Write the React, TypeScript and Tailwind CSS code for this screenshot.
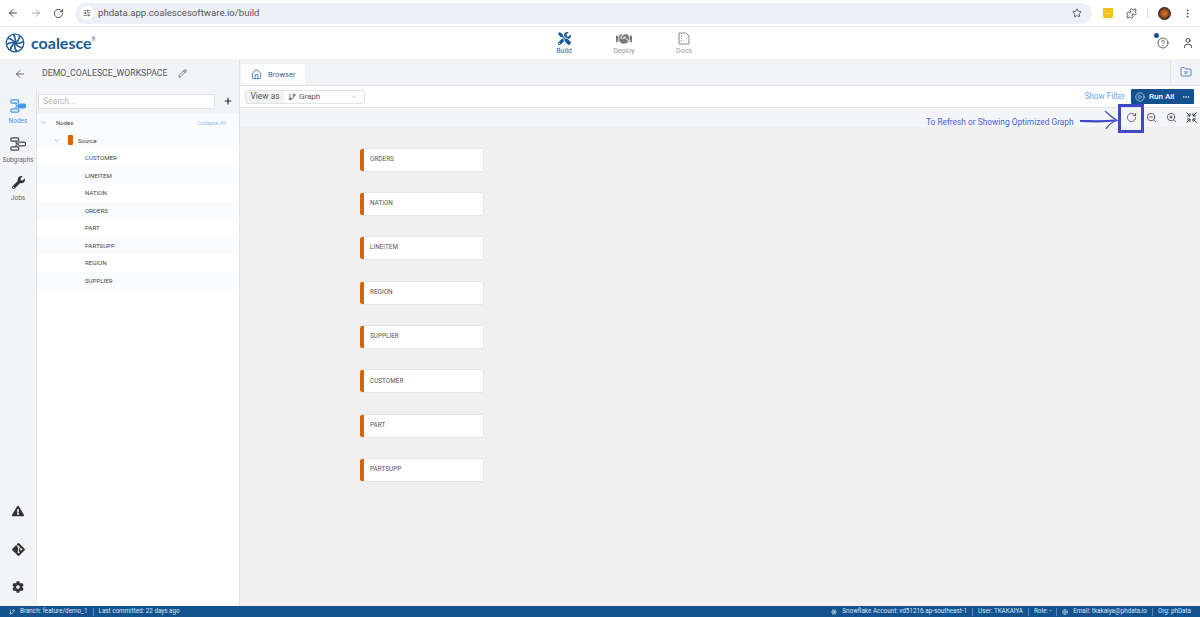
import React from "react";
import { ArrowLeft, ArrowRight, RotateCw, SlidersHorizontal, Star, Puzzle, MoreVertical, Pencil, Plus, ChevronDown, GitBranch, House, CirclePlay, Ellipsis, ZoomIn, ZoomOut, CircleHelp, User, FolderX, Globe, Snowflake } from "lucide-react";
import { FaTools, FaHandshake, FaWrench, FaExclamationTriangle, FaGitAlt, FaCog } from "react-icons/fa";

const F = { fontFamily: "Roboto, 'Liberation Sans', sans-serif" };

function Logo() {
  const blades = [0, 45, 90, 135, 180, 225, 270, 315];
  return (
    <svg width="20" height="20" viewBox="0 0 20 20" fill="none" stroke="#1b5a96">
      <circle cx="10" cy="10" r="8.8" strokeWidth="1.3" />
      {blades.map((a) => (
        <path key={a} d="M10 10 C 12 8, 15 7, 14.5 3" strokeWidth="1.5" transform={`rotate(${a} 10 10)`} />
      ))}
    </svg>
  );
}

function NodesIcon({ c, active }: { c: string; active?: boolean }) {
  return (
    <svg width="17" height="14" viewBox="0 0 17 14" fill="none" stroke={c} strokeWidth="1.2">
      <rect x="0.8" y="0.8" width="8" height="3.4" rx="1.5" />
      <rect x="0.8" y="9.8" width="8" height="3.4" rx="1.5" />
      <rect x="8" y="5.2" width="7.5" height="3.6" rx="1.5" fill={active ? c : "none"} />
      <path d="M6 4.2 V5.5 Q6 7 8 7 M6 9.8 V8.5 Q6 7 8 7" />
    </svg>
  );
}

function RailItem({ icon, label, color }: { icon: React.ReactNode; label: string; color: string }) {
  return (
    <div className="flex h-[38.5px] flex-col items-center justify-start">
      <div className="flex h-[17px] items-center">{icon}</div>
      <span className="mt-[3px] text-[6.5px] leading-[9px]" style={{ color }}>{label}</span>
    </div>
  );
}

function TreeRow({ label, alt }: { label: string; alt: boolean }) {
  return (
    <div className={`flex h-[17.5px] items-center pl-[48px] text-[6.1px] text-[#444] ${alt ? "bg-[#fafbfc]" : "bg-white"}`}>
      {label}
    </div>
  );
}

function GraphNode({ label }: { label: string }) {
  return (
    <div className="flex h-[24px] w-[124px] items-center rounded-[2px] border border-[#e6e6e6] border-l-0 bg-white">
      <div className="h-full w-[4px] shrink-0 rounded-l-[2px] bg-[#d4650a]" />
      <span className="ml-[6px] text-[6.4px] text-[#555]">{label}</span>
    </div>
  );
}

function FitIcon() {
  return (
    <svg width="11" height="11" viewBox="0 0 11 11" fill="none" stroke="#333" strokeWidth="1">
      <path d="M0.5 0.5 L3.6 3.6 M1.2 4 H4 V1.2" />
      <path d="M10.5 0.5 L7.4 3.6 M9.8 4 H7 V1.2" />
      <path d="M0.5 10.5 L3.6 7.4 M1.2 7 H4 V9.8" />
      <path d="M10.5 10.5 L7.4 7.4 M9.8 7 H7 V9.8" />
    </svg>
  );
}

export default function App() {
  return (
    <div className="relative flex h-[617px] w-[1200px] flex-col overflow-hidden bg-white" style={F}>
      {/* browser bar */}
      <div className="flex h-[27px] shrink-0 items-center border-b border-[#e5e7eb] bg-white pl-[7px] text-[#555]">
        <ArrowLeft size={12} strokeWidth={2} className="text-[#444]" />
        <ArrowRight size={12} strokeWidth={2} className="ml-[11px] text-[#aaa]" />
        <RotateCw size={11} strokeWidth={2} className="ml-[10.5px] text-[#444]" />
        <div className="ml-[11.5px] flex h-[21px] w-[1017px] shrink-0 items-center rounded-full bg-[#edf0f7] pl-[5px]">
          <div className="flex h-[14px] w-[14px] items-center justify-center rounded-full bg-white">
            <SlidersHorizontal size={8} className="text-[#444]" />
          </div>
          <span className="ml-[4px] text-[9.6px] text-[#555]">phdata.app.coalescesoftware.io/build</span>
          <Star size={10} strokeWidth={2} className="ml-auto mr-[10px] text-[#444]" />
        </div>
        <div className="ml-[11px] flex h-[10px] w-[10px] shrink-0 items-center justify-center rounded-[1px] bg-[#f2c21a] text-[6px] leading-none text-white">---</div>
        <Puzzle size={11} strokeWidth={2} className="ml-[12.5px] shrink-0 text-[#444]" />
        <div className="ml-[10.5px] h-[9px] w-px shrink-0 bg-[#cfdbe8]" />
        <div className="ml-[10px] h-[13px] w-[13px] shrink-0 rounded-full bg-[radial-gradient(circle,#c8641e_25%,#2a2320_70%)]" />
        <MoreVertical size={11} strokeWidth={2} className="ml-[11px] shrink-0 text-[#444]" />
      </div>

      {/* app header */}
      <div className="relative flex h-[32px] shrink-0 items-center bg-white pl-[5px]">
        <Logo />
        <span className="ml-[6px] text-[16px] font-bold leading-none text-[#1b5a96]" style={{ fontFamily: "Lato, sans-serif" }}>coalesce</span>
        <span className="mb-[7px] text-[5px] leading-none text-[#1b5a96]">®</span>
        <div className="absolute left-[534px] top-0 flex">
          {[
            { l: "Build", c: "#2a68a8", i: <FaTools size={13} color="#1b5a96" /> },
            { l: "Deploy", c: "#999", i: <FaHandshake size={16} color="#777" /> },
            { l: "Docs", c: "#999", i: <svg width="12" height="13" viewBox="0 0 12 13" fill="none" stroke="#888" strokeWidth="1"><path d="M1 1 H8 L11 4 V12 H1 Z" /><path d="M3 4.5 H4 M3 6.5 H4 M3 8.5 H4" /></svg> },
          ].map((x) => (
            <div key={x.l} className="flex w-[60px] flex-col items-center pt-[5px]">
              <div className="flex h-[13px] items-center">{x.i}</div>
              <span className="mt-[2px] text-[7px] leading-[9px]" style={{ color: x.c }}>{x.l}</span>
            </div>
          ))}
        </div>
        <div className="relative ml-auto mr-[6px] flex items-center gap-[13px]">
          <CircleHelp size={12} strokeWidth={1.5} className="text-[#333]" />
          <User size={12} strokeWidth={1.8} className="text-[#333]" />
          <div className="absolute left-[-3px] top-[-4px] h-[5px] w-[5px] rounded-full bg-[#14528f]" />
        </div>
      </div>

      {/* workspace */}
      <div className="flex min-h-0 flex-1">
        {/* left */}
        <div className="flex w-[240px] shrink-0 flex-col border-r border-[#e3e3e6] bg-[#f3f4f8]">
          <div className="flex h-[29px] shrink-0 items-center pl-[14px]">
            <ArrowLeft size={12} strokeWidth={1.6} className="text-[#444]" />
            <span className="ml-[16px] text-[8.7px] text-[#555]">DEMO_COALESCE_WORKSPACE</span>
            <Pencil size={9} strokeWidth={2} className="ml-[11px] text-[#555]" />
          </div>
          <div className="flex min-h-0 flex-1">
            <div className="flex w-[37px] shrink-0 flex-col border-r border-[#e3e3e6] pt-[9px]">
              <RailItem icon={<NodesIcon c="#3f97ee" active />} label="Nodes" color="#3f97ee" />
              <RailItem icon={<NodesIcon c="#444" />} label="Subgraphs" color="#666" />
              <RailItem icon={<FaWrench size={13} color="#333" />} label="Jobs" color="#666" />
              <div className="mt-auto flex flex-col items-center">
                <div className="flex h-[38px] items-center"><FaExclamationTriangle size={12} color="#333" /></div>
                <div className="flex h-[38px] items-center"><FaGitAlt size={15} color="#333" /></div>
                <div className="flex h-[38px] items-center"><FaCog size={12} color="#333" /></div>
              </div>
            </div>
            <div className="flex min-w-0 flex-1 flex-col">
              <div className="flex h-[26px] shrink-0 items-center">
                <div className="ml-[1px] flex h-[15px] w-[177px] items-center rounded-[1px] border border-[#dfdfdf] bg-white pl-[4px] text-[8.5px] text-[#b5b5b5]">Search...</div>
                <Plus size={10} strokeWidth={2.6} className="ml-[8px] text-[#222]" />
              </div>
              <div className="min-h-0 flex-1 bg-white">
                <div className="relative flex h-[17.5px] items-center bg-[#fbfcfd] pl-[3px] text-[6px] text-[#444]">
                  <ChevronDown size={7} className="text-[#888]" />
                  <span className="ml-[9px]">Nodes</span>
                  <span className="absolute right-[13px] top-[5px] text-[5.5px] text-[#8fbdf0]">Collapse All</span>
                </div>
                <div className="flex h-[17.5px] items-center bg-[#fafbfc] pl-[16px] text-[6px] text-[#444]">
                  <ChevronDown size={7} className="text-[#888]" />
                  <div className="ml-[8px] h-[10px] w-[5px] rounded-[1px] bg-[#d4650a]" />
                  <span className="ml-[5px]">Source</span>
                </div>
                {["CUSTOMER", "LINEITEM", "NATION", "ORDERS", "PART", "PARTSUPP", "REGION", "SUPPLIER"].map((n, i) => (
                  <TreeRow key={n} label={n} alt={i % 2 === 1} />
                ))}
              </div>
            </div>
          </div>
        </div>

        {/* main */}
        <div className="flex min-w-0 flex-1 flex-col">
          <div className="flex h-[26px] shrink-0 items-end bg-[#f3f4f8]">
            <div className="ml-[1px] flex h-[21px] w-[64px] items-center bg-white pl-[10px]">
              <House size={11} strokeWidth={1.6} className="text-[#1b5a96]" />
              <span className="ml-[6px] text-[7.5px] text-[#3b5f85]">Browser</span>
            </div>
            <div className="ml-auto flex h-[26px] w-[30px] items-center justify-center border-l border-[#dfe1e6]">
              <FolderX size={12} strokeWidth={1.6} className="text-[#2a68a8]" />
            </div>
          </div>
          <div className="flex h-[22px] shrink-0 items-center border-t border-[#e3e3e6] bg-white pl-[5px]">
            <div className="flex h-[14px] w-[120px] items-center rounded-[3px] border border-[#e2e2e2]">
              <div className="flex h-full w-[38px] items-center justify-center bg-[#f1f2f4] text-[8.4px] text-[#555]">View as</div>
              <GitBranch size={8} className="ml-[4px] text-[#444]" />
              <span className="ml-[3px] text-[8px] text-[#555]">Graph</span>
              <ChevronDown size={8} className="ml-auto mr-[6px] text-[#bbb]" />
            </div>
            <span className="ml-auto text-[8.2px] text-[#6aa8ee]">Show Filter</span>
            <div className="ml-[6px] mr-[6px] flex h-[15px] w-[63px] items-center rounded-[1px] bg-[#14528f] pl-[4px] text-white">
              <CirclePlay size={10} strokeWidth={1.4} />
              <span className="ml-[4px] text-[8px] font-medium">Run All</span>
              <Ellipsis size={8} className="ml-auto mr-[4px]" />
            </div>
          </div>
          <div className="flex h-[20px] shrink-0 items-center justify-end gap-[9px] border-t border-[#e3e3e6] bg-[#f4f5f8] pr-[3.5px] text-[#333]">
            <RotateCw size={11} strokeWidth={1.5} />
            <ZoomOut size={11} strokeWidth={1.6} />
            <ZoomIn size={11} strokeWidth={1.6} />
            <FitIcon />
          </div>
          <div className="flex min-h-0 flex-1 flex-col gap-[20.4px] bg-[#f0f0f0] pl-[120px] pt-[20.5px]">
            {["ORDERS", "NATION", "LINEITEM", "REGION", "SUPPLIER", "CUSTOMER", "PART", "PARTSUPP"].map((n) => (
              <GraphNode key={n} label={n} />
            ))}
          </div>
        </div>
      </div>

      {/* status */}
      <div className="flex h-[11px] shrink-0 items-center bg-[#14528f] pl-[9px] pr-[9px] text-[6.3px] text-[#dbe6f2]">
        <GitBranch size={6} />
        <span className="ml-[5px]">Branch: feature/demo_1</span>
        <div className="mx-[5px] h-[8px] w-px bg-[#5c88b5]" />
        <span>Last committed: 22 days ago</span>
        <Snowflake size={6} className="ml-auto" />
        <span className="ml-[5px]">Snowflake Account: vd51216.ap-southeast-1</span>
        <div className="mx-[5px] h-[8px] w-px bg-[#5c88b5]" />
        <span>User: TKAKAIYA</span>
        <div className="mx-[5px] h-[8px] w-px bg-[#5c88b5]" />
        <span>Role: -</span>
        <div className="mx-[5px] h-[8px] w-px bg-[#5c88b5]" />
        <Globe size={6} />
        <span className="ml-[5px]">Email: tkakaiya@phdata.io</span>
        <div className="mx-[5px] h-[8px] w-px bg-[#5c88b5]" />
        <span>Org: phData</span>
      </div>

      {/* annotation overlay */}
      <div className="absolute left-[1118px] top-[104px] h-[29px] w-[26px] border-[3px] border-[#3f49c8]" />
      <span className="absolute left-[926px] top-[116px] text-[8.35px] leading-[12px] text-[#4f5bd5]">To Refresh or Showing Optimized Graph</span>
      <svg className="absolute left-[1079px] top-[110px]" width="40" height="20" viewBox="0 0 40 20" fill="none" stroke="#3f49c8">
        <path d="M1 11 C10 11, 22 12, 36 10.5" strokeWidth="2.2" />
        <path d="M26 1 C30 5, 34 8, 38 10.5 C33 12, 29 15, 27 19" strokeWidth="1.2" />
      </svg>
    </div>
  );
}
